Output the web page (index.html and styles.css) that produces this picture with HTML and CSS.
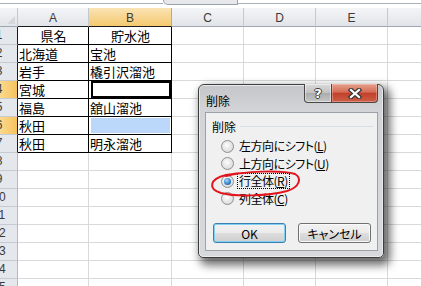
FILE: index.html
```html
<!DOCTYPE html>
<html>
  <head>
    <meta charset="UTF-8" />
    <title>削除 - Excel</title>
    <link rel="stylesheet" href="styles.css">
  </head>
  <body>
    <div class="app">
      <div class="edge">
        <div class="edge-line edge-left"></div>
        <div class="fx-box"></div>
        <div class="edge-line edge-right"></div>
      </div>
      <div class="sheet">
        <div class="hd corner">
          <svg width="8" height="8" viewBox="0 0 8 8"><path d="M8 0 L8 8 L0 8 Z" fill="#d3d7dc"/></svg>
        </div>
        <div class="hd col dark">A</div>
        <div class="hd col dark sel">B</div>
        <div class="hd col">C</div>
        <div class="hd col">D</div>
        <div class="hd col">E</div>
        <div class="hd col last"></div>

        <div class="rh dark"><span>1</span></div>
        <div class="c bx ctr">県名</div>
        <div class="c bx ctr">貯水池</div>
        <div class="c"></div><div class="c"></div><div class="c"></div><div class="c last"></div>

        <div class="rh dark"><span>2</span></div>
        <div class="c bx">北海道</div>
        <div class="c bx">宝池</div>
        <div class="c"></div><div class="c"></div><div class="c"></div><div class="c last"></div>

        <div class="rh dark"><span>3</span></div>
        <div class="c bx">岩手</div>
        <div class="c bx">橇引沢溜池</div>
        <div class="c"></div><div class="c"></div><div class="c"></div><div class="c last"></div>

        <div class="rh dark sel"><span>4</span></div>
        <div class="c bx">宮城</div>
        <div class="c bx"><div class="active"></div></div>
        <div class="c"></div><div class="c"></div><div class="c"></div><div class="c last"></div>

        <div class="rh dark"><span>5</span></div>
        <div class="c bx">福島</div>
        <div class="c bx">舘山溜池</div>
        <div class="c"></div><div class="c"></div><div class="c"></div><div class="c last"></div>

        <div class="rh dark sel"><span>6</span></div>
        <div class="c bx">秋田</div>
        <div class="c bx"><div class="picked"></div></div>
        <div class="c"></div><div class="c"></div><div class="c"></div><div class="c last"></div>

        <div class="rh dark"><span>7</span></div>
        <div class="c bx">秋田</div>
        <div class="c bx">明永溜池</div>
        <div class="c"></div><div class="c"></div><div class="c"></div><div class="c last"></div>

        <div class="rh"><span>8</span></div>
        <div class="c"></div><div class="c"></div><div class="c"></div><div class="c"></div><div class="c"></div><div class="c last"></div>
        <div class="rh"><span>9</span></div>
        <div class="c"></div><div class="c"></div><div class="c"></div><div class="c"></div><div class="c"></div><div class="c last"></div>
        <div class="rh"><span>10</span></div>
        <div class="c"></div><div class="c"></div><div class="c"></div><div class="c"></div><div class="c"></div><div class="c last"></div>
        <div class="rh"><span>11</span></div>
        <div class="c"></div><div class="c"></div><div class="c"></div><div class="c"></div><div class="c"></div><div class="c last"></div>
        <div class="rh"><span>12</span></div>
        <div class="c"></div><div class="c"></div><div class="c"></div><div class="c"></div><div class="c"></div><div class="c last"></div>
        <div class="rh"><span>13</span></div>
        <div class="c"></div><div class="c"></div><div class="c"></div><div class="c"></div><div class="c"></div><div class="c last"></div>
        <div class="rh"><span>14</span></div>
        <div class="c"></div><div class="c"></div><div class="c"></div><div class="c"></div><div class="c"></div><div class="c last"></div>
        <div class="rh"><span>15</span></div>
        <div class="c"></div><div class="c"></div><div class="c"></div><div class="c"></div><div class="c"></div><div class="c last"></div>
      </div>

      <div class="dialog">
        <div class="titlebar">
          <span class="title">削除</span>
          <div class="caps">
            <div class="cap help">?</div>
            <div class="cap close">
              <svg width="14" height="11" viewBox="0 0 14 11">
                <path d="M3 2 L11 9 M11 2 L3 9" stroke="#3a3a3a" stroke-width="4.6" stroke-linecap="square"/>
                <path d="M3 2 L11 9 M11 2 L3 9" stroke="#ffffff" stroke-width="2.2" stroke-linecap="square"/>
              </svg>
            </div>
          </div>
        </div>
        <div class="client">
          <div class="group-head">
            <span>削除</span>
            <i class="rule"></i>
          </div>
          <div class="opts">
            <div class="opt"><span class="radio"></span><span class="lbl">左方向にシフト(<u>L</u>)</span></div>
            <div class="opt"><span class="radio"></span><span class="lbl">上方向にシフト(<u>U</u>)</span></div>
            <div class="opt"><span class="radio on"><i class="dot"></i></span><span class="lbl focus">行全体(<u>R</u>)</span></div>
            <div class="opt"><span class="radio"></span><span class="lbl">列全体(<u>C</u>)</span></div>
          </div>
          <div class="btns">
            <button class="btn default">OK</button>
            <button class="btn">キャンセル</button>
          </div>
        </div>
      </div>

      <svg class="mark" width="421" height="286" viewBox="0 0 421 286">
        <path d="M226 176 C244 171, 282 170, 295 174 C302 178, 300 187, 287 191 C268 196, 236 197, 221 193 C208 189, 209 179, 226 175 C232 174, 238 173, 244 173" fill="none" stroke="#e4141c" stroke-width="2" stroke-linecap="round"/>
      </svg>
    </div>
  </body>
</html>
```

FILE: styles.css
```css
* {
  box-sizing: border-box;
}
body {
  margin: 0;
  background-color: #fff;
  font-family: "Noto Sans CJK JP", sans-serif;
}
.app {
  position: relative;
  width: 421px;
  height: 286px;
  overflow: hidden;
  background-color: #fff;
}

/* strip left over from the formula bar */
.edge {
  display: flex;
  align-items: flex-start;
  height: 8px;
}
.edge-line {
  height: 4px;
  border-bottom: 1px solid #a9b0b9;
}
.edge-left {
  width: 163px;
}
.edge-right {
  flex: 1;
}
.fx-box {
  width: 75px;
  height: 5px;
  background-color: #e6e8eb;
  border: 1px solid #9aa2ac;
  border-top: none;
  border-radius: 0 0 0 6px;
}

/* sheet */
.sheet {
  display: grid;
  grid-template-columns: 18px 71px 83px 72px 72px 72px 1fr;
  grid-template-rows: 19px;
  grid-auto-rows: 18px;
}
.hd {
  background: linear-gradient(#f4f5f7, #e1e4e8);
  border-right: 1px solid #c4c9cf;
  border-bottom: 1px solid #9ea6b0;
  font-family: "Liberation Sans", sans-serif;
  font-size: 12px;
  color: #3a3a3a;
  text-align: center;
  padding-top: 2px;
  line-height: 16px;
}
.hd.dark {
  border-bottom-color: #1a1a1a;
}
.hd.sel {
  background: linear-gradient(#fae3b4, #f5c96f);
  border-right-color: #e2a24a;
}
.hd.last {
  border-right: none;
}
.corner {
  display: flex;
  align-items: flex-end;
  justify-content: flex-end;
  padding: 0 2px 2px 0;
}
.rh {
  background-color: #e4e7eb;
  border-right: 1px solid #b3b9c1;
  border-bottom: 1px solid #c6cbd2;
  overflow: hidden;
  font-family: "Liberation Sans", sans-serif;
  font-size: 12px;
  color: #3a3a3a;
  line-height: 17px;
}
.rh span {
  display: block;
  width: 20px;
  margin-left: -11px;
  text-align: center;
}
.rh.dark {
  border-right-color: #1a1a1a;
}
.rh.sel {
  background: linear-gradient(90deg, #fbd98e, #f6c35d);
}
.c {
  border-right: 1px solid #d9d9d9;
  border-bottom: 1px solid #d9d9d9;
  font-size: 13px;
  line-height: 17px;
  padding-left: 1px;
  white-space: nowrap;
  overflow: hidden;
  color: #000;
}
.c.last {
  border-right: none;
}
.c.bx {
  border-right-color: #000;
  border-bottom-color: #000;
}
.c.ctr {
  text-align: center;
}
.active {
  height: 100%;
  border: 2px solid #000;
  margin-left: 1px;
}
.picked {
  height: 15px;
  margin: 1px 1px 0 1px;
  background-color: #bbd8fb;
}

/* delete dialog */
.dialog {
  position: absolute;
  left: 198px;
  top: 84px;
  width: 186px;
  height: 174px;
  display: flex;
  flex-direction: column;
  padding: 0 5px 6px 6px;
  border: 1px solid #3d3d3d;
  border-radius: 6px 6px 5px 5px;
  background: linear-gradient(#c4c6c9, #d2d4d7 26px, #d7d9dc);
  box-shadow: inset 0 0 0 1px #e9eaec, 4px 5px 10px 2px rgba(0, 0, 0, 0.6);
}
.titlebar {
  height: 27px;
  display: flex;
  align-items: flex-start;
  padding-left: 1px;
}
.title {
  font-size: 12px;
  line-height: 12px;
  margin-top: 10px;
  color: #000;
}
.caps {
  display: flex;
  margin-left: auto;
  margin-top: -1px;
}
.cap {
  height: 19px;
  border: 1px solid #474747;
  border-top: none;
  display: flex;
  align-items: center;
  justify-content: center;
}
.help {
  width: 28px;
  border-radius: 0 0 0 4px;
  background: linear-gradient(#dadada, #c2c2c2 48%, #acacac 52%, #c6c6c6);
  box-shadow: inset 0 0 0 1px rgba(255, 255, 255, 0.45);
  font-family: "DejaVu Sans", sans-serif;
  font-weight: bold;
  font-size: 13px;
  line-height: 13px;
  color: #fff;
  text-shadow: 1px 0 #3a3a3a, -1px 0 #3a3a3a, 0 1px #3a3a3a, 0 -1px #3a3a3a;
}
.close {
  width: 46px;
  border-left: none;
  border-radius: 0 0 4px 0;
  background: linear-gradient(#e6a08e, #d56c55 45%, #c1412a 52%, #cf5e46);
  box-shadow: inset 0 0 0 1px rgba(255, 220, 210, 0.35);
}
.client {
  flex: 1;
  display: flex;
  flex-direction: column;
  background-color: #f0f0f0;
  border: 1px solid #9da2a8;
  padding: 3px 0 7px 0;
  font-size: 12px;
  font-feature-settings: "palt";
  color: #000;
}
.group-head {
  display: flex;
  align-items: center;
  height: 20px;
  padding-left: 6px;
  padding-right: 4px;
}
.rule {
  flex: 1;
  height: 1px;
  margin-left: 4px;
  background-color: #d5dfe5;
}
.opts {
  margin-top: 1.5px;
}
.opt {
  height: 17.5px;
  display: flex;
  align-items: center;
  padding-left: 15px;
}
.radio {
  width: 13px;
  height: 13px;
  border-radius: 50%;
  border: 1px solid #8e8f8f;
  background: radial-gradient(circle at 45% 40%, #fdfdfd, #e4e4e4 55%, #cdcdcd);
  display: flex;
  align-items: center;
  justify-content: center;
}
.dot {
  width: 7px;
  height: 7px;
  border-radius: 50%;
  background: radial-gradient(circle at 40% 35%, #a6dbfa, #2c7cc9 60%, #174f8f);
}
.lbl {
  margin-left: 4px;
  line-height: 14px;
  padding: 0 1px;
  letter-spacing: -0.5px;
}
.lbl.focus {
  outline: 1px dotted #000;
  outline-offset: 0;
}
.btns {
  margin-top: auto;
  display: flex;
  justify-content: space-between;
  padding: 0 6px 0 7px;
}
.btn {
  width: 73px;
  height: 20px;
  padding: 0;
  border: 1px solid #707070;
  border-radius: 3px;
  background: linear-gradient(#f2f2f2, #ebebeb 48%, #dddddd 52%, #cfcfcf);
  box-shadow: inset 0 0 0 1px #fafafa;
  font-family: "Noto Sans CJK JP", sans-serif;
  font-size: 12px;
  font-feature-settings: "palt";
  color: #000;
}
.btn.default {
  border-color: #3c7fb1;
  box-shadow: inset 0 0 0 1px #7fd0f4;
}

/* red hand-drawn marker */
.mark {
  position: absolute;
  left: 0;
  top: 0;
  pointer-events: none;
}
```
